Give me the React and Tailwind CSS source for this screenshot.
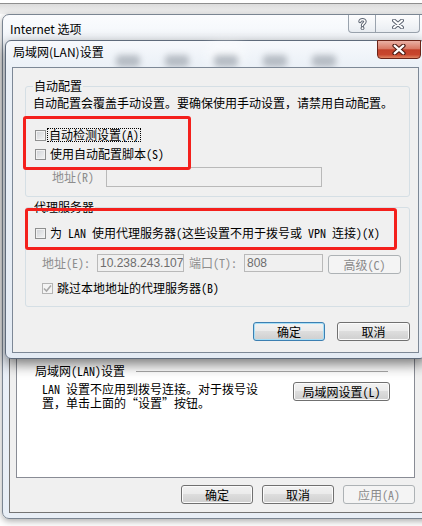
import React from "react";

const MONO = "font-['Noto_Sans_Mono_CJK_SC','Noto_Sans_CJK_SC',sans-serif]";
const UI = "font-['Noto_Sans_CJK_SC','Noto_Sans',sans-serif]";

const BTN_FACE =
  "bg-[linear-gradient(#f2f2f2_0%,#ebebeb_45%,#dddddd_50%,#cfcfcf_100%)]";

// Win7 push button
const Button = ({children, variant = "normal", className = ""}) => {
  const styles = {
    normal: `border-[#707070] text-black ${BTN_FACE} shadow-[inset_0_0_0_1px_#fbfbfb]`,
    primary: `border-[#3c7fb1] text-black ${BTN_FACE} shadow-[inset_0_0_0_1px_#a6def6]`,
    disabled: "border-[#adb2b5] text-[#8a8a8a] bg-[#f4f4f4]",
  };
  return (
    <div
      className={`flex shrink-0 items-center justify-center rounded-[3px] border leading-[14px] ${styles[variant]} ${className}`}
    >
      {children}
    </div>
  );
};

const Checkbox = ({checked = false, disabled = false}) => (
  <span
    className={`flex h-[11px] w-[11px] shrink-0 items-center justify-center border ${
      disabled
        ? "border-[#b4b4b4] bg-[#f4f4f4]"
        : "border-[#8e8f8f] bg-[linear-gradient(135deg,#cfd2d6,#f4f4f4)] shadow-[inset_0_0_0_1px_#f2f2f2]"
    }`}
  >
    {checked && (
      <svg width="9" height="9" viewBox="0 0 9 9">
        <path d="M1 4.5 L3.5 7 L8 1.5" fill="none" stroke="#a8a8a8" strokeWidth="1.6" />
      </svg>
    )}
  </span>
);

const TextBox = ({value = "", className = ""}) => (
  <div
    className={`flex shrink-0 items-center overflow-hidden whitespace-nowrap border border-[#b9b9b9] bg-[#f0f0f0] pl-[2px] font-['Liberation_Sans',sans-serif] text-[12px] leading-[14px] text-[#6d6d6d] ${className}`}
  >
    {value}
  </div>
);

// outlined white glyph used by the caption buttons
const CaptionX = ({w = 12, h = 10, dark = "#5a6270", lite = "#ffffff"}) => (
  <svg width={w} height={h} viewBox="0 0 12 10">
    <path d="M2 1.5 L10 8.5 M10 1.5 L2 8.5" stroke={dark} strokeWidth="4" strokeLinecap="round" />
    <path d="M2 1.5 L10 8.5 M10 1.5 L2 8.5" stroke={lite} strokeWidth="2" strokeLinecap="round" />
  </svg>
);

const CaptionHelp = () => (
  <svg width="9" height="12" viewBox="0 0 9 12">
    <path
      d="M2 3.6 C2 1.2 7 1.2 7 3.6 C7 5.4 4.5 5.3 4.5 7.6"
      fill="none"
      stroke="#5a6270"
      strokeWidth="3.4"
      strokeLinecap="round"
    />
    <path
      d="M2 3.6 C2 1.2 7 1.2 7 3.6 C7 5.4 4.5 5.3 4.5 7.6"
      fill="none"
      stroke="#ffffff"
      strokeWidth="1.4"
      strokeLinecap="round"
    />
    <circle cx="4.5" cy="10.2" r="1.5" fill="#ffffff" stroke="#5a6270" strokeWidth="1" />
  </svg>
);

// tab strip of the options window; it lies under the dialog, so only its shapes are drawn
const TAB_WIDTHS = [46, 46, 46, 46, 48, 46, 46];

export default function App() {
  return (
    <div className={`relative h-[526px] w-[422px] overflow-hidden bg-white text-[12px] text-black ${MONO}`}>
      {/* edge of the window behind */}
      <div className="h-[3px] bg-white" />
      <div className="h-px bg-[#8f8f8f]" />
      <div className="h-[10px] bg-[linear-gradient(#dcdcdc,#f3f3f3)]" />

      {/* Internet 选项 window */}
      <div className="ml-[2px] flex h-[505px] w-[440px] flex-col rounded-[7px] border border-[#7a8592] bg-[linear-gradient(#fbfcfe,#edf2f8_40px,#e8eef6)] shadow-[0_2px_7px_rgba(0,0,0,0.35)]">
        <div className="flex h-[29px] shrink-0 items-start pr-[21px]">
          <span className={`pl-[7px] pt-[6px] text-[12px] leading-[16px] ${UI}`}>Internet 选项</span>
          <div className="ml-auto flex">
            <div className="flex h-[18px] w-[28px] items-center justify-center rounded-bl-[4px] border border-t-0 border-[#9aa3ae] bg-[linear-gradient(#fdfdfe,#e9edf2)]">
              <CaptionHelp />
            </div>
            <div className="flex h-[18px] w-[44px] items-center justify-center rounded-br-[4px] border border-l-0 border-t-0 border-[#9aa3ae] bg-[linear-gradient(#fdfdfe,#e9edf2)]">
              <CaptionX />
            </div>
          </div>
        </div>

        <div className="ml-[6px] flex h-[469px] w-[430px] flex-col border border-[#747474] bg-[#f0f0f0] pl-[6px]">
          <div className="flex h-[23px] items-end gap-[2px] pl-[2px]">
            {TAB_WIDTHS.map((w, i) => (
              <div
                key={i}
                style={{width: w}}
                className={`h-[19px] border border-b-0 border-[#898c95] ${
                  i === 4 ? "bg-white" : "bg-[#ececec]"
                }`}
              />
            ))}
          </div>

          <div className="flex h-[410px] w-[399px] flex-col border border-[#898c95] bg-white">
            <div className="h-[296px]" />
            {/* 局域网(LAN)设置 */}
            <div className="flex h-[12px] items-center pl-[18px] leading-[12px]">
              <span>局域网(LAN)设置</span>
              <span className="ml-[11px] h-px w-[252px] bg-[#a7a7a7]" />
            </div>
            <div className="mt-[5px] flex items-start justify-between pl-[25px] pr-[24px]">
              <p className="leading-[14px]">
                LAN 设置不应用到拨号连接。对于拨号设
                <br />
                置，单击上面的“设置”按钮。
              </p>
              <Button className="h-[19px] w-[97px]">局域网设置(L)</Button>
            </div>
          </div>

          <div className="mt-[7px] flex w-[399px] justify-end gap-[9px]">
            <Button className="h-[19px] w-[72px]">确定</Button>
            <Button className="h-[19px] w-[72px]">取消</Button>
            <Button variant="disabled" className="h-[19px] w-[72px]">
              应用(A)
            </Button>
          </div>
        </div>
      </div>

      {/* 局域网(LAN)设置 dialog, on top of the options window */}
      <div className="absolute left-[5px] top-[40px] flex h-[319px] w-[421px] flex-col rounded-[6px] border border-[#5f6b7b] bg-[linear-gradient(#f7f9fc,#e9eff6_30px,#e4ebf4)] shadow-[0_5px_14px_rgba(0,0,0,0.55)]">
        <div className="flex h-[26px] shrink-0 items-start">
          <span className={`pl-[7px] pt-[3px] text-[12px] leading-[16px] ${UI}`}>局域网(LAN)设置</span>
          {/* blurred tabs of the window behind, seen through the glass */}
          <div className="ml-[12px] flex h-[12px] gap-[25px] self-end">
            <span className="h-[12px] w-[24px] rounded-[4px] bg-[#7f8791] opacity-50 blur-[3px]" />
            <span className="h-[12px] w-[24px] rounded-[4px] bg-[#7f8791] opacity-50 blur-[3px]" />
            <span className="h-[12px] w-[24px] rounded-[4px] bg-[#7f8791] opacity-50 blur-[3px] shadow-[0_-6px_10px_6px_#ffffff]" />
            <span className="h-[12px] w-[24px] rounded-[4px] bg-[#7f8791] opacity-50 blur-[3px]" />
            <span className="h-[12px] w-[24px] rounded-[4px] bg-[#7f8791] opacity-50 blur-[3px]" />
          </div>
          <div className="-mt-px ml-auto mr-[4px] flex h-[19px] w-[44px] items-center justify-center rounded-b-[4px] border border-[#6b2418] bg-[linear-gradient(#eab1a5_0%,#d97a66_45%,#c3412a_52%,#c8462d_80%,#e08462_100%)]">
            <CaptionX w={14} h={11} dark="#4a1a12" />
          </div>
        </div>

        <div className="relative ml-[6px] h-[286px] w-[407px] shrink-0 border border-[#7d8896] bg-[#f0f0f0]">
          {/* 自动配置 */}
          <fieldset className="ml-[12px] mt-[11px] w-[385px] rounded-[3px] border border-[#d5dfe5] pb-[9px] pl-[7px]">
            <legend className="px-[1px] leading-[14px]">自动配置</legend>
            <p className="mt-[3px] leading-[13px]">自动配置会覆盖手动设置。要确保使用手动设置，请禁用自动配置。</p>
            <div className="ml-[2px] mt-[19px] flex h-[14px] items-center gap-[2px]">
              <Checkbox />
              <span className="px-px leading-[12px] outline-1 outline-offset-0 outline-dotted outline-black">
                自动检测设置(A)
              </span>
            </div>
            <div className="ml-[2px] mt-[5px] flex h-[14px] items-center gap-[4px]">
              <Checkbox />
              <span>使用自动配置脚本(S)</span>
            </div>
            <div className="mt-[6px] flex items-center">
              <span className="w-[73px] pl-[19px] text-[#8d8d8d]">地址(R)</span>
              <TextBox className="h-[20px] w-[216px]" />
            </div>
          </fieldset>

          {/* 代理服务器 */}
          <fieldset className="ml-[12px] mt-[3px] w-[385px] rounded-[3px] border border-[#d5dfe5] pb-[11px] pl-[7px]">
            <legend className="px-[1px] leading-[14px]">代理服务器</legend>
            <div className="ml-[2px] mt-[12px] flex h-[14px] items-center gap-[4px]">
              <Checkbox />
              <span>为 LAN 使用代理服务器(这些设置不用于拨号或 VPN 连接)(X)</span>
            </div>
            <div className="ml-[9px] mt-[14px] flex items-start text-[#8d8d8d]">
              <span className="w-[55px] leading-[18px]">地址(E):</span>
              <TextBox value="10.238.243.107" className="h-[18px] w-[87px]" />
              <span className="ml-[5px] w-[55px] leading-[18px]">端口(T):</span>
              <TextBox value="808" className="h-[18px] w-[79px]" />
              <Button variant="disabled" className="ml-[5px] mt-px h-[19px] w-[73px]">
                高级(C)
              </Button>
            </div>
            <div className="ml-[9px] mt-[7px] flex h-[14px] items-center gap-[4px]">
              <Checkbox checked disabled />
              <span>跳过本地地址的代理服务器(B)</span>
            </div>
          </fieldset>

          <div className="ml-[12px] mt-[15px] flex w-[385px] justify-end gap-[12px]">
            <Button variant="primary" className="h-[19px] w-[72px]">
              确定
            </Button>
            <Button className="h-[19px] w-[73px]">取消</Button>
          </div>

          {/* red annotation boxes */}
          <div className="absolute left-[10px] top-[48px] h-[54px] w-[168px] rounded-[3px] border-[3px] border-[#f4201c]" />
          <div className="absolute left-[12px] top-[140px] h-[42px] w-[372px] rounded-[3px] border-[3px] border-[#f4201c]" />
        </div>
      </div>
    </div>
  );
}
